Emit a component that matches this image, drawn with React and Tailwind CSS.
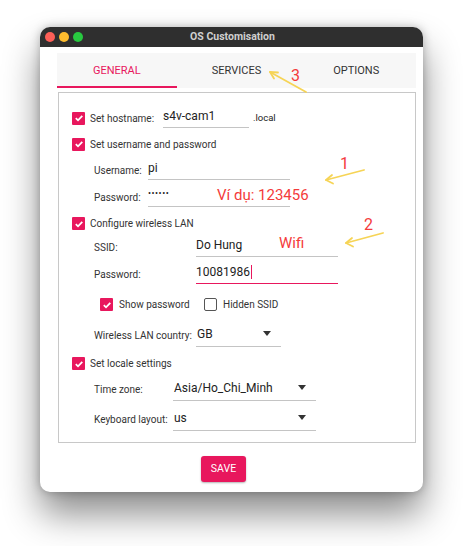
import React from 'react';

const PINK = 'bg-[#e8175d]';

const Check = ({ checked = true }) => (
    checked ? (
        <div className={`w-[13px] h-[13px] rounded-[1px] ${PINK} flex items-center justify-center shrink-0`}>
            <svg width="10" height="10" viewBox="0 0 10 10">
                <path d="M1.8 5.2 L4 7.3 L8.3 2.8" fill="none" stroke="white" strokeWidth="1.8" />
            </svg>
        </div>
    ) : (
        <div className="w-[13px] h-[13px] rounded-[2px] border-[1.5px] border-[#555] bg-white shrink-0" />
    )
);

const Caret = () => (
    <svg width="8" height="5" viewBox="0 0 8 5" className="shrink-0">
        <path d="M0 0 H8 L4 5 Z" fill="#333" />
    </svg>
);

const Field = ({ w, children, active = false }) => (
    <div className={`h-[20px] flex items-center pb-[3px] border-b ${active ? 'border-[#e8175d] border-b-[1.5px]' : 'border-[#c4c4c4]'} text-[12px] text-[#222] ${w}`}>
        {children}
    </div>
);

const Select = ({ w, value }) => (
    <div className={`h-[24px] flex items-center justify-between pb-[2px] border-b border-[#c4c4c4] text-[12px] text-[#222] ${w} pl-[1px] pr-[10px]`}>
        <span>{value}</span>
        <Caret />
    </div>
);

export default function App() {
    return (
        <div className="relative w-[464px] h-[546px] bg-white overflow-hidden" style={{ fontFamily: 'Roboto, "Liberation Sans", sans-serif' }}>
            <div className="pl-[40px] pt-[27px]">
                <div className="w-[383px] h-[465px] rounded-[10px] overflow-hidden bg-white shadow-[0_22px_36px_rgba(0,0,0,0.45),0_0_10px_rgba(0,0,0,0.25)]">
                    {/* title bar */}
                    <div className="relative h-[20px] bg-[#2f2f2f] flex items-center pl-[5px] gap-[4px]">
                        <div className="w-[10px] h-[10px] rounded-full bg-[#fe5f57]" />
                        <div className="w-[10px] h-[10px] rounded-full bg-[#febc2e]" />
                        <div className="w-[10px] h-[10px] rounded-full bg-[#28c840]" />
                        <div className="absolute inset-0 flex items-center justify-center text-[10.5px] font-bold text-[#cfcfcf] pl-[2px]">OS Customisation</div>
                    </div>

                    <div className="pl-[17px] pr-[7px] pt-[6px]">
                        {/* tabs */}
                        <div className="h-[35px] bg-[#f7f7f7] flex text-[11px] text-[#333]">
                            <div className="w-[120px] flex items-center justify-center pt-[3px] text-[#e8175d] border-b-2 border-[#e8175d]">GENERAL</div>
                            <div className="w-[120px] flex items-center justify-center pt-[1px]">SERVICES</div>
                            <div className="w-[120px] flex items-center justify-center pt-[1px]">OPTIONS</div>
                        </div>

                        {/* content */}
                        <div className="mt-[4px] ml-[1px] w-[358px] h-[351px] border border-[#c8c8c8] pl-[13px] pt-[12px] text-[#333]">
                            <div className="h-[26px] flex items-center">
                                <Check />
                                <span className="ml-[5px] text-[10px] w-[73px]">Set hostname:</span>
                                <Field w="w-[86px]">s4v-cam1</Field>
                                <span className="ml-[4px] text-[9.5px] text-[#222] pt-[1px]">.local</span>
                            </div>
                            <div className="h-[26px] flex items-center">
                                <Check />
                                <span className="ml-[5px] text-[10px]">Set username and password</span>
                            </div>
                            <div className="h-[26px] flex items-center pl-[22px]">
                                <span className="w-[54px] text-[10px]">Username:</span>
                                <Field w="w-[142px]">pi</Field>
                            </div>
                            <div className="h-[28px] flex items-center pl-[22px]">
                                <span className="w-[54px] text-[10px]">Password:</span>
                                <Field w="w-[142px]"><span className="text-[9px] tracking-[0.5px] -mt-[3px]">••••••</span></Field>
                            </div>
                            <div className="h-[25px] flex items-center">
                                <Check />
                                <span className="ml-[5px] text-[10px]">Configure wireless LAN</span>
                            </div>
                            <div className="h-[22px] flex items-center pl-[22px]">
                                <span className="w-[102px] text-[10px]">SSID:</span>
                                <Field w="w-[142px]">Do Hung</Field>
                            </div>
                            <div className="h-[32px] flex items-center pl-[22px]">
                                <span className="w-[102px] text-[10px]">Password:</span>
                                <Field w="w-[142px]" active>10081986<span className="ml-[1px] w-[1.5px] h-[14px] bg-[#e8175d]" /></Field>
                            </div>
                            <div className="h-[29px] flex items-center pl-[28px]">
                                <Check />
                                <span className="ml-[6px] text-[10px] w-[85px]">Show password</span>
                                <Check checked={false} />
                                <span className="ml-[6px] text-[10px]">Hidden SSID</span>
                            </div>
                            <div className="h-[32px] flex items-center pl-[22px]">
                                <span className="w-[102px] text-[10px]">Wireless LAN country:</span>
                                <Select w="w-[85px]" value="GB" />
                            </div>
                            <div className="h-[25px] flex items-center">
                                <Check />
                                <span className="ml-[5px] text-[10px]">Set locale settings</span>
                            </div>
                            <div className="h-[26px] flex items-center pl-[22px]">
                                <span className="w-[79px] text-[10px]">Time zone:</span>
                                <Select w="w-[143px]" value="Asia/Ho_Chi_Minh" />
                            </div>
                            <div className="h-[34px] flex items-center pl-[22px]">
                                <span className="w-[79px] text-[10px]">Keyboard layout:</span>
                                <Select w="w-[143px]" value="us" />
                            </div>
                        </div>

                        {/* save */}
                        <div className="mt-[12px] ml-[144px]">
                            <button className={`w-[45px] h-[26px] rounded-[3px] ${PINK} text-white text-[10.5px] shadow-[0_1px_2px_rgba(0,0,0,0.3)]`}>SAVE</button>
                        </div>
                    </div>
                </div>
            </div>

            {/* annotations */}
            <svg className="absolute inset-0 pointer-events-none" width="464" height="546" viewBox="0 0 464 546">
                <g stroke="#f6d456" strokeWidth="1.8" fill="none" strokeLinecap="round" strokeLinejoin="round">
                    <path d="M306 92 L270 72" />
                    <path d="M270 72 L278 72.5 M270 72 L274 78.5" />
                    <path d="M364 170 L326 180" />
                    <path d="M326 180 L332 175 M326 180 L333 183.5" />
                    <path d="M383 233 L346 243" />
                    <path d="M346 243 L352 238 M346 243 L353 246.5" />
                </g>
            </svg>
            <span className="absolute left-[291px] top-[68px] text-[16px] leading-none text-[#f43b3b]">3</span>
            <span className="absolute left-[340px] top-[156px] text-[16px] leading-none text-[#f43b3b]">1</span>
            <span className="absolute left-[364px] top-[217px] text-[16px] leading-none text-[#f43b3b]">2</span>
            <span className="absolute left-[217px] top-[188px] text-[15px] leading-none text-[#f43b3b]">Ví dụ: 123456</span>
            <span className="absolute left-[279px] top-[236px] text-[15px] leading-none text-[#f43b3b]">Wifi</span>
        </div>
    );
}
